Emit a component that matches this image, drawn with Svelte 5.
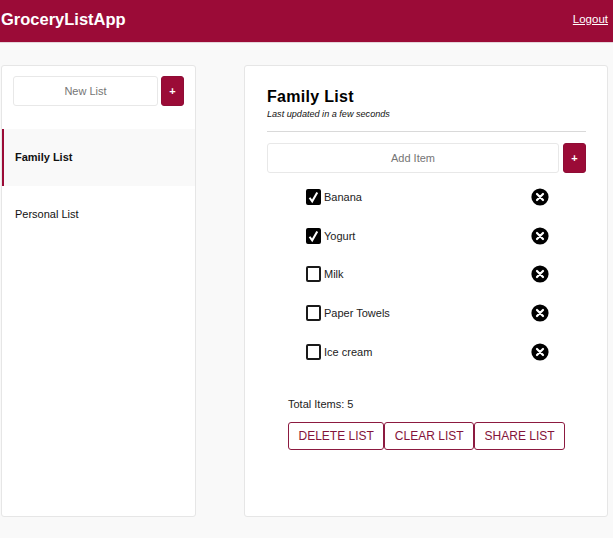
<script>
  const items = [
    { name: 'Banana', done: true },
    { name: 'Yogurt', done: true },
    { name: 'Milk', done: false },
    { name: 'Paper Towels', done: false },
    { name: 'Ice cream', done: false }
  ];
  const lists = [
    { name: 'Family List', active: true },
    { name: 'Personal List', active: false }
  ];
</script>

<div class="page">
  <header class="topbar">
    <span class="brand">GroceryListApp</span>
    <a class="logout" href="#logout">Logout</a>
  </header>

  <main class="content">
    <aside class="card side">
      <form class="new-list">
        <div class="field">New List</div>
        <button type="button" class="add">+</button>
      </form>
      <ul class="lists">
        {#each lists as l}
          <li class:active={l.active}>{l.name}</li>
        {/each}
      </ul>
    </aside>

    <section class="card detail">
      <h1>Family List</h1>
      <p class="updated">Last updated in a few seconds</p>
      <hr />
      <form class="new-item">
        <div class="field">Add Item</div>
        <button type="button" class="add">+</button>
      </form>

      <ul class="items">
        {#each items as it}
          <li>
            <span class="check" class:on={it.done}>
              {#if it.done}
                <svg viewBox="0 0 16 16" width="15" height="16"><path d="M3.8 8.8 6.6 12.6 12 3.2" fill="none" stroke="#fff" stroke-width="2.2" /></svg>
              {/if}
            </span>
            <span class="name">{it.name}</span>
            <svg class="remove" viewBox="0 0 18 18" width="18" height="18">
              <circle cx="9" cy="9" r="8.6" fill="#000" />
              <path d="M6 6 12 12M12 6 6 12" stroke="#fff" stroke-width="2.2" stroke-linecap="round" />
            </svg>
          </li>
        {/each}
      </ul>

      <p class="total">Total Items: 5</p>
      <div class="actions">
        <button type="button">Delete List</button>
        <button type="button">Clear List</button>
        <button type="button">Share List</button>
      </div>
    </section>
  </main>
</div>

<style>
  :global(body) {
    margin: 0;
    background: #fff;
    font-family: "Liberation Sans", Arial, sans-serif;
  }
  .page {
    background: #f9f9f9;
    height: 538px;
    overflow: hidden;
  }
  .topbar {
    background: #9b0b37;
    border-bottom: 1px solid #e4d5da;
    display: flex;
    align-items: center;
    justify-content: space-between;
    padding: 0 5px 4px 1px;
    box-sizing: border-box;
    height: 43px;
    color: #fff;
  }
  .brand {
    font-size: 16.5px;
    font-weight: 700;
  }
  .logout {
    color: #fff;
    font-size: 11.5px;
    text-decoration: underline;
  }
  .content {
    display: flex;
    gap: 48px;
    padding: 22px 5px 0 1px;
  }
  .card {
    background: #fff;
    border: 1px solid #e6e6e6;
    border-radius: 3px;
    box-sizing: border-box;
    height: 452px;
  }
  .side {
    width: 195px;
    padding-top: 10px;
  }
  .new-list {
    display: flex;
    gap: 3px;
    margin: 0 11px;
  }
  .new-item {
    display: flex;
    gap: 4px;
  }
  .field {
    flex: 1;
    height: 30px;
    box-sizing: border-box;
    border: 1px solid #e8e8e8;
    border-radius: 3px;
    background: #fff;
    color: #757575;
    font-size: 11px;
    line-height: 28px;
    text-align: center;
  }
  .add {
    width: 23px;
    height: 30px;
    padding: 0;
    border: 1px solid #8f0d36;
    border-radius: 3px;
    background: #9b0b37;
    color: #fff;
    font: 700 11px "Liberation Sans", Arial, sans-serif;
  }
  .lists {
    list-style: none;
    margin: 23px 0 0;
    padding: 0;
  }
  .lists li {
    height: 57px;
    line-height: 57px;
    padding-left: 11px;
    font-size: 11px;
    color: #111;
    box-sizing: border-box;
    border-left: 2px solid transparent;
  }
  .lists li.active {
    background: #f9f9f9;
    border-left-color: #9b0b37;
    font-weight: 700;
  }
  .detail {
    width: 364px;
    padding: 20px 21px 0 22px;
  }
  h1 {
    margin: 0;
    font-size: 16px;
    line-height: 22px;
    letter-spacing: 0.3px;
    color: #000;
  }
  .updated {
    margin: 0;
    font-size: 9.1px;
    line-height: 12px;
    font-style: italic;
    color: #111;
  }
  hr {
    margin: 11px 0 11px;
    border: 0;
    border-top: 1px solid #d9d9d9;
  }
  .items {
    list-style: none;
    margin: 5px 0 0;
    padding: 0 37px 0 39px;
  }
  .items li {
    display: flex;
    align-items: center;
    height: 38.6px;
    font-size: 11px;
    color: #222;
  }
  .check {
    width: 15px;
    height: 16px;
    box-sizing: border-box;
    border: 2px solid #1a1a1a;
    border-radius: 2px;
    background: #fff;
    display: flex;
    align-items: center;
    justify-content: center;
    flex: none;
  }
  .check.on {
    background: #000;
    border-color: #000;
  }
  .check svg {
    flex: none;
  }
  .name {
    flex: 1;
    margin-left: 3px;
  }
  .remove {
    flex: none;
  }
  .total {
    margin: 27px 0 0 21px;
    font-size: 11px;
    line-height: 13px;
    color: #222;
  }
  .actions {
    display: flex;
    margin: 11px 0 0 21px;
  }
  .actions button {
    height: 28px;
    padding: 0 9.5px;
    background: #fff;
    border: 1px solid #8c1a40;
    border-radius: 3px;
    color: #84143a;
    font: 12px "Liberation Sans", Arial, sans-serif;
    text-transform: uppercase;
  }
</style>
